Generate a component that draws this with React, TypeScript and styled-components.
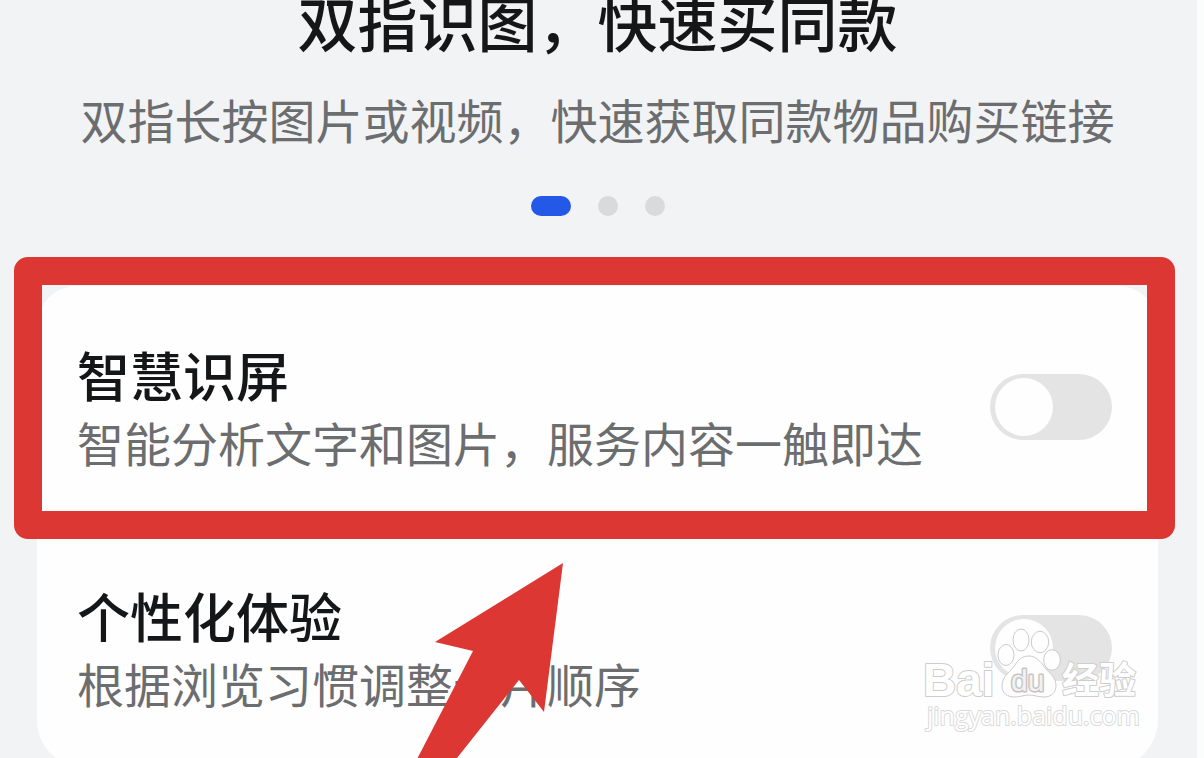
import React from "react";
import styled, { createGlobalStyle } from "styled-components";

const RED = "#dc3732";

const GlobalStyle = createGlobalStyle`
  *, *::before, *::after { box-sizing: border-box; }
  html, body { margin: 0; background: #f1f3f5; }
  body {
    overflow: hidden;
    font-family: "Noto Sans CJK SC", "Noto Sans", sans-serif;
    color: #151617;
  }
`;

const Page = styled.main`
  position: relative;
  min-height: 100vh;
  padding: 0 39px 0 37px;
  border-right: 7px solid #fbfdfd;
  background: #f1f3f5;
`;

const Intro = styled.header`
  display: flex;
  flex-direction: column;
  align-items: center;
  gap: 44px;
  padding-bottom: 70px;
  white-space: nowrap;
`;

const Title = styled.h1`
  margin: 0;
  font-size: 60px;
  line-height: 42px;
  font-weight: 500;
`;

const Subtitle = styled.p`
  margin: 0;
  font-size: 47px;
  line-height: 66px;
  font-weight: 400;
  color: #6b6d6f;
`;

const Pager = styled.nav`
  display: flex;
  gap: 27px;
`;

const Dot = styled.button<{ $active?: boolean }>`
  width: ${(p) => (p.$active ? 40 : 20)}px;
  height: 20px;
  padding: 0;
  border: 0;
  border-radius: 10px;
  background: ${(p) => (p.$active ? "#2458e6" : "#d9dadc")};
`;

const Card = styled.section`
  position: relative;
  border-radius: 40px 40px 48px 48px;
  background: #fefefe;
`;

const Row = styled.div`
  position: relative;
  display: flex;
  align-items: center;
  justify-content: space-between;
  height: 241px;
  padding: 0 46px 0 40px;
`;

const RowText = styled.label`
  display: flex;
  flex-direction: column;
  white-space: nowrap;
`;

const RowTitle = styled.span`
  font-size: 53px;
  line-height: 70px;
  font-weight: 500;
`;

const RowNote = styled.span`
  font-size: 47px;
  line-height: 66px;
  font-weight: 400;
  color: #6b6d6f;
`;

const Switch = styled.input`
  appearance: none;
  flex: none;
  width: 122px;
  height: 66px;
  margin: 0;
  padding: 4px 5px;
  border-radius: 33px;
  background: #e4e4e4;

  &::before {
    content: "";
    display: block;
    width: 58px;
    height: 58px;
    border-radius: 50%;
    background: #fefefe;
  }

  &:checked {
    background: #2458e6;
  }

  &:checked::before {
    margin-left: auto;
  }
`;

const Highlight = styled.div`
  position: absolute;
  inset: -29px -17px -12px -23px;
  border: 28px solid ${RED};
  border-radius: 14px;
  pointer-events: none;
`;

const Arrow = styled.svg`
  position: absolute;
  top: 277px;
  left: 368px;
  pointer-events: none;
`;

const Watermark = styled.svg`
  position: absolute;
  top: 336px;
  right: 14px;
  pointer-events: none;
`;

interface SettingProps {
  id: string;
  title: string;
  note: string;
  highlighted?: boolean;
}

function Setting({ id, title, note, highlighted }: SettingProps) {
  return (
    <Row>
      <RowText htmlFor={id}>
        <RowTitle>{title}</RowTitle>
        <RowNote>{note}</RowNote>
      </RowText>
      <Switch id={id} type="checkbox" role="switch" />
      {highlighted && <Highlight />}
    </Row>
  );
}

function BaiduMark() {
  return (
    <Watermark width="224" height="120" viewBox="0 0 224 120" aria-label="Baidu 经验">
      <g fill="#ffffff" stroke="#cdcdcd" strokeWidth="2" strokeLinejoin="round" paintOrder="stroke">
        <text x="3" y="74" fontFamily="Liberation Sans, sans-serif" fontWeight="700" fontSize="46">
          Bai
        </text>
        <text x="142" y="72" fontFamily="Noto Sans CJK SC, sans-serif" fontWeight="700" fontSize="37">
          经验
        </text>
        <text x="7" y="103" fontFamily="Open Sans, sans-serif" fontSize="25" stroke="#dadada">
          jingyan.baidu.com
        </text>
      </g>
      <g fill="#fefefe" stroke="#cbcbcb" strokeWidth="1">
        <ellipse cx="86" cy="33" rx="8" ry="10.5" />
        <ellipse cx="101" cy="18" rx="8" ry="11" />
        <ellipse cx="120" cy="20" rx="8.7" ry="10.7" />
        <ellipse cx="132" cy="38" rx="8.3" ry="10.3" />
        <path d="M109 34C102 34 98 38 95 43C91 50 82 53 82 64C82 71 87 75 95 75C100 75 104 73 109 73C114 73 118 75 124 75C132 75 136 70 136 63C136 54 127 50 123 43C119 38 115 34 109 34Z" />
      </g>
      <text
        x="91"
        y="69"
        fontFamily="Liberation Sans, sans-serif"
        fontSize="30"
        fill="#f2f2f2"
        stroke="#c4c4c4"
        strokeWidth="3"
        strokeLinejoin="round"
        paintOrder="stroke"
      >
        du
      </text>
    </Watermark>
  );
}

export default function App() {
  return (
    <>
      <GlobalStyle />
      <Page lang="zh-CN">
        <Intro>
          <Title>双指识图，快速买同款</Title>
          <Subtitle>双指长按图片或视频，快速获取同款物品购买链接</Subtitle>
          <Pager aria-label="功能介绍">
            <Dot $active aria-label="第 1 页" />
            <Dot aria-label="第 2 页" />
            <Dot aria-label="第 3 页" />
          </Pager>
        </Intro>
        <Card>
          <Setting
            id="smart-screen"
            title="智慧识屏"
            note="智能分析文字和图片，服务内容一触即达"
            highlighted
          />
          <Setting id="personalised" title="个性化体验" note="根据浏览习惯调整卡片顺序" />
          <Arrow width="160" height="200" viewBox="-30 0 160 200" fill={RED}>
            <path d="M128 0L0 79L38 88L-20 200H18L84 117L109 149Z" />
          </Arrow>
          <BaiduMark />
        </Card>
      </Page>
    </>
  );
}
